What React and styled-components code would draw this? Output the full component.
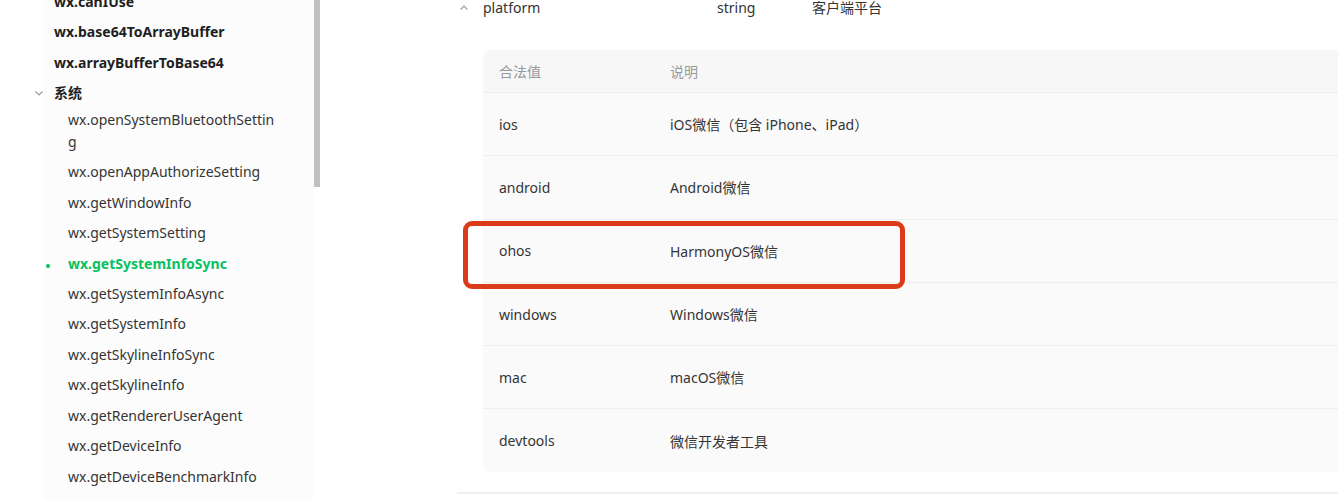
import React from "react";
import styled, { createGlobalStyle } from "styled-components";

const GlobalStyle = createGlobalStyle`
  html, body {
    margin: 0;
    padding: 0;
    background: #fff;
  }
  body {
    font-family: "Noto Sans", "Noto Sans CJK SC", sans-serif;
    font-size: 14px;
    color: #333;
    overflow: hidden;
  }
`;

const Page = styled.div`
  display: flex;
  height: 500px;
  overflow: hidden;
`;

const Gutter = styled.div`
  width: 44px;
  flex-shrink: 0;
`;

const Sidebar = styled.div`
  width: 270px;
  flex-shrink: 0;
  background: #fcfcfc;
  height: 500px;
`;

const NavList = styled.ul`
  list-style: none;
  margin: -13px 0 0;
  padding: 0 34px 0 0;
`;

const NavItem = styled.li`
  position: relative;
  padding: 4px 0 ${(p) => (p.$group ? 0 : 4)}px ${(p) => (p.$child ? 24 : 10)}px;
  line-height: 22.4px;
  font-weight: ${(p) => (p.$bold || p.$active ? 700 : 400)};
  color: ${(p) => (p.$active ? "#07c160" : p.$bold ? "#1f1f1f" : "#353535")};
  word-break: break-all;
`;

const Bullet = styled.span`
  position: absolute;
  left: 2px;
  top: 15px;
  width: 4px;
  height: 4px;
  border-radius: 50%;
  background: #07c160;
`;

const GroupHead = styled.div`
  display: flex;
  align-items: center;
  gap: 10px;
  margin-left: -20px;
  color: #1f1f1f;
`;

const Scrollbar = styled.div`
  width: 6px;
  flex-shrink: 0;
  align-self: flex-start;
  height: 187px;
  background: #c1c1c1;
`;

const Main = styled.div`
  flex: 1;
  padding-left: 137px;
  min-width: 0;
`;

const ParamRow = styled.div`
  display: flex;
  align-items: center;
  height: 16px;
  padding-left: 2px;
  line-height: 16px;
`;

const Chevron = styled.span`
  display: inline-flex;
  width: 24px;
`;

const ParamName = styled.span`
  width: 234px;
`;

const ParamType = styled.span`
  width: 95px;
`;

const TableWrap = styled.div`
  position: relative;
  margin: 34px 0 0 26px;
`;

const Table = styled.div`
  background: #fafafa;
  border-radius: 8px 0 0 8px;
  overflow: hidden;
  margin-right: -10px;
`;

const Row = styled.div`
  display: grid;
  grid-template-columns: 171px 1fr;
  align-items: center;
  padding-left: 16px;
  height: ${(p) => (p.$head ? 42 : 63.3)}px;
  background: ${(p) => (p.$head ? "#f7f7f7" : "transparent")};
  color: ${(p) => (p.$head ? "#999" : "#353535")};
  border-top: ${(p) => (p.$first ? "none" : "1px solid #eeeeee")};
  box-sizing: border-box;
`;

const Highlight = styled.div`
  position: absolute;
  left: -20px;
  top: 171px;
  width: 442px;
  height: 68px;
  border: 5px solid #da3b18;
  border-radius: 9px;
  box-sizing: border-box;
  pointer-events: none;
`;

const Divider = styled.div`
  height: 2px;
  background: #efefef;
  margin-top: 20px;
`;

const ChevronIcon = ({ up }) => (
  <svg width="10" height="10" viewBox="0 0 10 10" fill="none">
    <path
      d={up ? "M1.5 6.5 L5 3 L8.5 6.5" : "M1.5 3.5 L5 7 L8.5 3.5"}
      stroke="#999"
      strokeWidth="1.1"
    />
  </svg>
);

const topItems = ["wx.canIUse", "wx.base64ToArrayBuffer", "wx.arrayBufferToBase64"];

const systemItems = [
  "wx.openSystemBluetoothSetting",
  "wx.openAppAuthorizeSetting",
  "wx.getWindowInfo",
  "wx.getSystemSetting",
  "wx.getSystemInfoSync",
  "wx.getSystemInfoAsync",
  "wx.getSystemInfo",
  "wx.getSkylineInfoSync",
  "wx.getSkylineInfo",
  "wx.getRendererUserAgent",
  "wx.getDeviceInfo",
  "wx.getDeviceBenchmarkInfo",
];

const values = [
  ["ios", "iOS微信（包含 iPhone、iPad）"],
  ["android", "Android微信"],
  ["ohos", "HarmonyOS微信"],
  ["windows", "Windows微信"],
  ["mac", "macOS微信"],
  ["devtools", "微信开发者工具"],
];

export default function App() {
  return (
    <>
      <GlobalStyle />
      <Page>
        <Gutter />
        <Sidebar>
          <NavList>
            {topItems.map((t) => (
              <NavItem key={t} $bold>
                {t}
              </NavItem>
            ))}
            <NavItem $bold $group>
              <GroupHead>
                <ChevronIcon />
                系统
              </GroupHead>
            </NavItem>
            {systemItems.map((t) => {
              const active = t === "wx.getSystemInfoSync";
              return (
                <NavItem key={t} $child $active={active}>
                  {active && <Bullet />}
                  {t}
                </NavItem>
              );
            })}
          </NavList>
        </Sidebar>
        <Scrollbar />
        <Main>
          <ParamRow>
            <Chevron>
              <ChevronIcon up />
            </Chevron>
            <ParamName>platform</ParamName>
            <ParamType>string</ParamType>
            <span>客户端平台</span>
          </ParamRow>
          <TableWrap>
            <Table>
              <Row $head $first>
                <span>合法值</span>
                <span>说明</span>
              </Row>
              {values.map(([v, d]) => (
                <Row key={v}>
                  <span>{v}</span>
                  <span>{d}</span>
                </Row>
              ))}
            </Table>
            <Highlight />
          </TableWrap>
          <Divider />
        </Main>
      </Page>
    </>
  );
}
